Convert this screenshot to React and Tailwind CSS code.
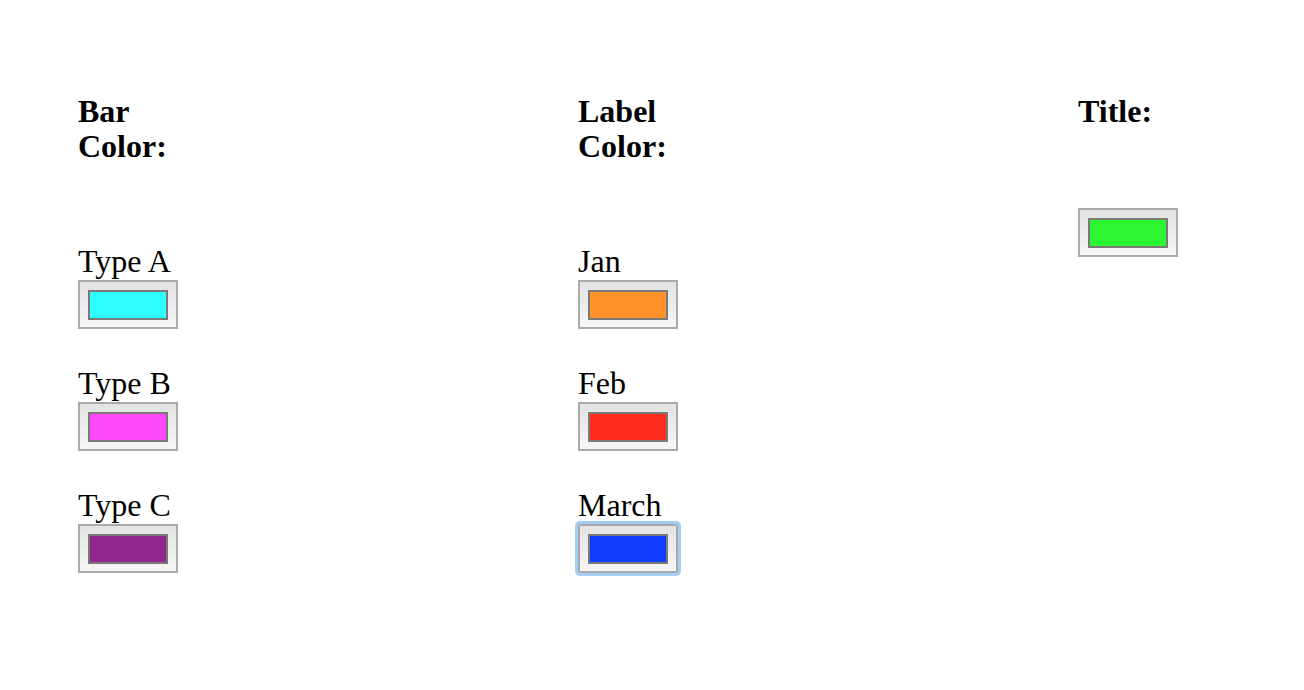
import React from "react";

function Swatch({ color, focused }) {
  return (
    <div
      className={
        "w-[100px] h-[49px] border-2 border-[#a9a9a9] bg-gradient-to-b from-[#e3e3e3] to-[#f6f6f6] flex items-center justify-center " +
        (focused ? "rounded-[2px] shadow-[0_0_0_3px_#a3cdf3]" : "")
      }
    >
      <div
        className="w-[80px] h-[30px] border-2 border-[#7a7a7a]"
        style={{ backgroundColor: color }}
      />
    </div>
  );
}

function Group({ label, color, focused }) {
  return (
    <div className="mb-[38px]">
      <div className="text-[32px] leading-[33px]">{label}</div>
      <div className="mt-[2px]">
        <Swatch color={color} focused={focused} />
      </div>
    </div>
  );
}

export default function App() {
  return (
    <div
      className="min-h-[690px] w-[1304px] bg-white text-black pl-[78px] pt-[94px] grid grid-cols-[500px_500px_226px]"
      style={{ fontFamily: '"Liberation Serif", "Times New Roman", serif' }}
    >
      <div>
        <div className="w-[100px] text-[32px] leading-[35px] font-bold">Bar Color:</div>
        <div className="mt-[81px]">
          <Group label="Type A" color="#2effff" />
          <Group label="Type B" color="#ff4bff" />
          <Group label="Type C" color="#93278f" />
        </div>
      </div>
      <div>
        <div className="w-[100px] text-[32px] leading-[35px] font-bold">Label Color:</div>
        <div className="mt-[81px]">
          <Group label="Jan" color="#ff9329" />
          <Group label="Feb" color="#ff2c1e" />
          <Group label="March" color="#0f3cff" focused />
        </div>
      </div>
      <div>
        <div className="w-[100px] text-[32px] leading-[35px] font-bold">Title:</div>
        <div className="mt-[79px]">
          <Swatch color="#2cf62f" />
        </div>
      </div>
    </div>
  );
}
